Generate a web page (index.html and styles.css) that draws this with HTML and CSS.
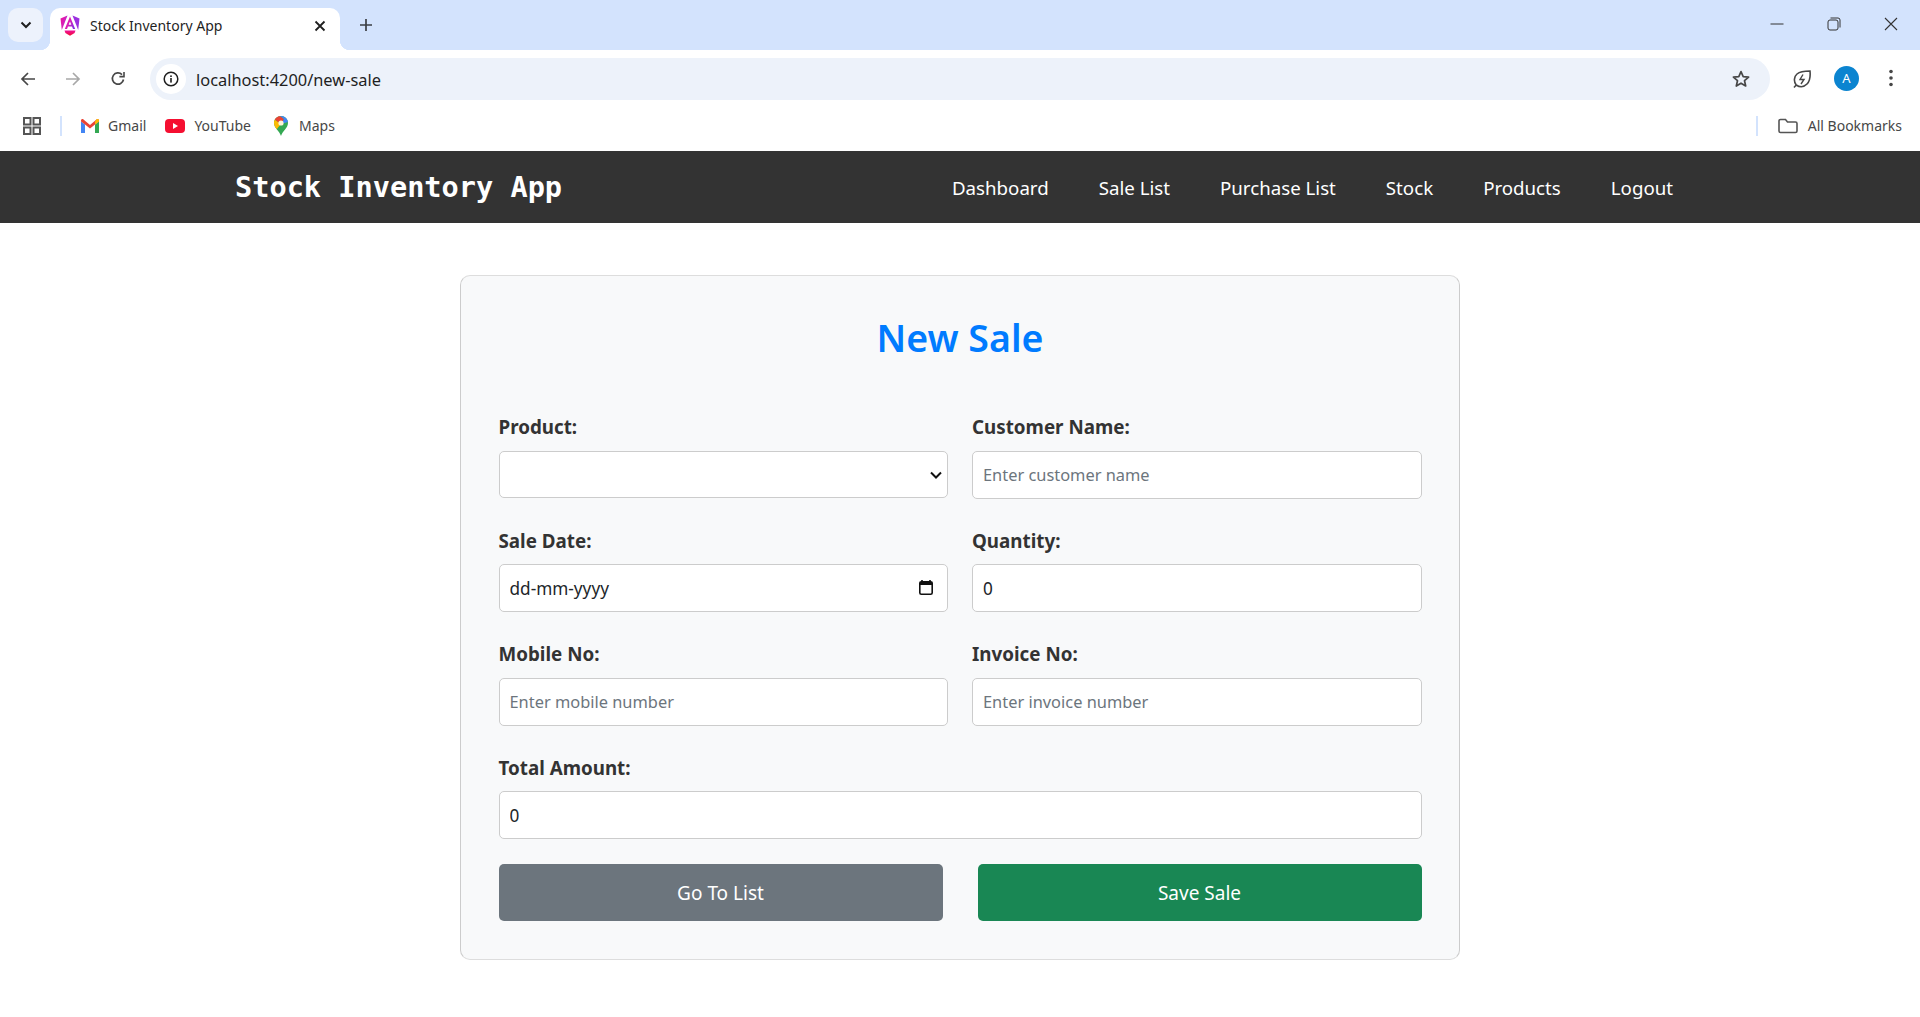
FILE: index.html
```html
<!DOCTYPE html>
<html lang="en">
<head>
    <meta charset="UTF-8">
    <meta name="viewport" content="width=device-width, initial-scale=1.0">
    <title>Stock Inventory App</title>
    <link rel="stylesheet" href="styles.css">
</head>
<body>
    <div class="browser">
        <div class="tab-strip">
            <div class="tab-search">
                <svg width="12" height="8" viewBox="0 0 12 8"><path d="M1.5 1.5 6 6l4.5-4.5" fill="none" stroke="#1f1f1f" stroke-width="2"/></svg>
            </div>
            <div class="tab">
                <svg class="tab-icon" width="20" height="22" viewBox="0 0 20 22">
                    <defs>
                        <linearGradient id="ng" x1="0" y1="0" x2="1" y2="0.6">
                            <stop offset="0" stop-color="#f0109c"/>
                            <stop offset="0.55" stop-color="#d71fb8"/>
                            <stop offset="1" stop-color="#8a2be2"/>
                        </linearGradient>
                        <linearGradient id="ng2" x1="0" y1="0" x2="0" y2="1">
                            <stop offset="0" stop-color="#f0109c"/>
                            <stop offset="1" stop-color="#f00f30"/>
                        </linearGradient>
                    </defs>
                    <path d="M7.500 0.500 0.500 3.500 1.800 15 7.500 0.500Z" fill="url(#ng)"/>
                    <path d="M12.500 0.500 19.500 3.500 18.200 15 12.500 0.500Z" fill="#9b30e0"/>
                    <path d="M10 1.500 4.800 14h2.200l1-2.600h4l1 2.600h2.200L10 1.500Zm0 5 1.300 3.200H8.700L10 6.500Z" fill="url(#ng)"/>
                    <path d="M4.500 15.500h11L14.600 18 10 20.800 5.400 18l-.9-2.500Z" fill="url(#ng2)"/>
                </svg>
                <span class="tab-title">Stock Inventory App</span>
                <svg class="tab-close" width="12" height="12" viewBox="0 0 12 12"><path d="M1.500 1.500l9 9M10.500 1.500l-9 9" stroke="#1f1f1f" stroke-width="1.800"/></svg>
            </div>
            <svg class="new-tab" width="14" height="14" viewBox="0 0 14 14"><path d="M7 1v12M1 7h12" stroke="#3b3f44" stroke-width="1.700"/></svg>
            <div class="window-btns">
                <svg width="14" height="14" viewBox="0 0 14 14"><path d="M0.500 7h13" stroke="#333" stroke-width="1"/></svg>
                <svg width="14" height="14" viewBox="0 0 14 14" fill="none" stroke="#333" stroke-width="1"><rect x="1" y="3" width="10" height="10" rx="2"/><path d="M3.500 1h7.500a2 2 0 0 1 2 2v7.500"/></svg>
                <svg width="14" height="14" viewBox="0 0 14 14"><path d="M1 1l12 12M13 1L1 13" stroke="#333" stroke-width="1.100"/></svg>
            </div>
        </div>

        <div class="toolbar">
            <svg class="tool-icon" width="16" height="16" viewBox="0 0 16 16" fill="none" stroke="#474747" stroke-width="1.700"><path d="M15 8H2M8 2 2 8l6 6"/></svg>
            <svg class="tool-icon" width="16" height="16" viewBox="0 0 16 16" fill="none" stroke="#a8a8a8" stroke-width="1.700"><path d="M1 8h13M8 2l6 6-6 6"/></svg>
            <svg class="tool-icon" width="16" height="16" viewBox="0 0 16 16" fill="none" stroke="#474747" stroke-width="1.700"><path d="M13.500 8.500A5.600 5.600 0 1 1 12 3.600"/><path d="M14 1v4.600H9.400" stroke-width="1.600"/></svg>
            <div class="omnibox">
                <div class="site-info">
                    <svg width="16" height="16" viewBox="0 0 16 16"><circle cx="8" cy="8" r="6.800" fill="none" stroke="#1f1f1f" stroke-width="1.500"/><rect x="7.200" y="7" width="1.600" height="4.600" fill="#1f1f1f"/><rect x="7.200" y="4.400" width="1.600" height="1.600" fill="#1f1f1f"/></svg>
                </div>
                <span class="url">localhost:4200/new-sale</span>
                <svg class="star" width="20" height="20" viewBox="0 0 20 20"><path d="M10 2.600l2.200 5 5.400.5-4.100 3.600 1.200 5.300L10 14.200 5.300 17l1.200-5.300L2.400 8.100l5.400-.5L10 2.600Z" fill="none" stroke="#474747" stroke-width="1.700" stroke-linejoin="round"/></svg>
            </div>
            <svg class="leaf" width="20" height="20" viewBox="0 0 20 20" fill="none" stroke="#474747" stroke-width="1.600"><path d="M2 18.500l2.200-2.500C1.500 12.500 2 7.500 5 5s8-3 13-3c.5 5 0 10-3 13s-7 3.500-10.800 1"/><path d="M11 5.500 8 10.500h4l-3 4.500" stroke-width="1.400"/></svg>
            <div class="avatar">A</div>
            <svg class="kebab" width="4" height="18" viewBox="0 0 4 18" fill="#474747"><circle cx="2" cy="2.500" r="1.800"/><circle cx="2" cy="9" r="1.800"/><circle cx="2" cy="15.500" r="1.800"/></svg>
        </div>

        <div class="bookmarks">
            <svg class="apps" width="18" height="18" viewBox="0 0 18 18" fill="none" stroke="#555" stroke-width="2"><rect x="1" y="1" width="6.500" height="6.500"/><rect x="10.500" y="1" width="6.500" height="6.500"/><rect x="1" y="10.500" width="6.500" height="6.500"/><rect x="10.500" y="10.500" width="6.500" height="6.500"/></svg>
            <span class="bm-sep"></span>
            <div class="bookmark bm-gmail">
                <svg width="18" height="14" viewBox="0 0 18 14">
                    <path d="M0 2.500V14h4V5.500L0 2.500Z" fill="#4285f4"/>
                    <path d="M14 5.500V14h4V2.500l-4 3Z" fill="#34a853"/>
                    <path d="M0 1.500C0 .2 1.500-.4 2.500.4L9 6l6.500-5.600c1-.8 2.500-.2 2.500 1.100v1L14 5.500 9 9.500l-5-4-4-3v-1Z" fill="#ea4335"/>
                    <path d="M14 2.600 15.500.4c1-.8 2.500-.2 2.500 1.100v1l-4 3V2.600Z" fill="#fbbc04"/>
                </svg>
                <span>Gmail</span>
            </div>
            <div class="bookmark bm-youtube">
                <svg width="20" height="14" viewBox="0 0 20 14"><rect width="20" height="14" rx="4" fill="#f50f31"/><path d="M8 4l5 3-5 3V4Z" fill="#fff"/></svg>
                <span>YouTube</span>
            </div>
            <div class="bookmark bm-maps">
                <svg width="14" height="20" viewBox="0 0 14 20">
                    <defs>
                        <clipPath id="pin"><path d="M7 0C3.100 0 0 3.100 0 7c0 5 5.500 8 7 13 1.500-5 7-8 7-13 0-3.900-3.100-7-7-7Z"/></clipPath>
                    </defs>
                    <g clip-path="url(#pin)">
                        <rect width="14" height="20" fill="#34a853"/>
                        <path d="M0 3 7 8 2 14 0 12V3Z" fill="#fbbc04"/>
                        <path d="M0 3 7 8l3-5-4-3H0V3Z" fill="#ea4335"/>
                        <path d="M6 0h8v6L7 8 10 3 6 0Z" fill="#4285f4"/>
                    </g>
                    <circle cx="7" cy="7" r="2.600" fill="#fff6d8"/>
                </svg>
                <span>Maps</span>
            </div>
            <span class="bm-sep bm-sep-right"></span>
            <div class="bookmark all-bookmarks">
                <svg width="20" height="16" viewBox="0 0 20 16" fill="none" stroke="#555" stroke-width="1.600"><path d="M1 3a1.500 1.500 0 0 1 1.500-1.500h5L9.500 4h8A1.500 1.500 0 0 1 19 5.500V13a1.500 1.500 0 0 1-1.500 1.500h-15A1.500 1.500 0 0 1 1 13V3Z"/></svg>
                <span>All Bookmarks</span>
            </div>
        </div>
    </div>

    <nav class="navbar">
        <div class="brand">Stock Inventory App</div>
        <ul class="nav-links">
            <li>Dashboard</li>
            <li>Sale List</li>
            <li>Purchase List</li>
            <li>Stock</li>
            <li>Products</li>
            <li>Logout</li>
        </ul>
    </nav>

    <main class="page">
        <form class="sale-card">
            <h2 class="sale-title">New Sale</h2>
            <div class="form-grid">
                <div class="field">
                    <label for="product">Product:</label>
                    <div class="control-box">
                        <select id="product" class="select-input"><option></option></select>
                        <svg class="select-arrow" width="12" height="8" viewBox="0 0 12 8"><path d="M1 1.500l5 5 5-5" fill="none" stroke="#111" stroke-width="2"/></svg>
                    </div>
                </div>
                <div class="field">
                    <label for="customer">Customer Name:</label>
                    <input id="customer" type="text" placeholder="Enter customer name">
                </div>
                <div class="field">
                    <label for="saleDate">Sale Date:</label>
                    <div class="control-box">
                        <input id="saleDate" type="text" value="dd-mm-yyyy">
                        <svg class="date-icon" width="14" height="15" viewBox="0 0 14 15"><path d="M3 0v2M11 0v2" stroke="#111" stroke-width="1.600"/><rect x="0.800" y="1.800" width="12.400" height="12.400" rx="1.500" fill="none" stroke="#111" stroke-width="1.600"/><rect x="0.800" y="2" width="12.400" height="3" fill="#111"/></svg>
                    </div>
                </div>
                <div class="field">
                    <label for="qty">Quantity:</label>
                    <input id="qty" type="number" value="0">
                </div>
                <div class="field">
                    <label for="mobile">Mobile No:</label>
                    <input id="mobile" type="text" placeholder="Enter mobile number">
                </div>
                <div class="field">
                    <label for="invoice">Invoice No:</label>
                    <input id="invoice" type="text" placeholder="Enter invoice number">
                </div>
                <div class="field field-wide">
                    <label for="total">Total Amount:</label>
                    <input id="total" type="number" value="0">
                </div>
            </div>
            <div class="form-actions">
                <button type="button" class="btn btn-list">Go To List</button>
                <button type="button" class="btn btn-save">Save Sale</button>
            </div>
        </form>
    </main>
</body>
</html>
```

FILE: styles.css
```css
* {
    box-sizing: border-box;
}
body {
    margin: 0;
    font-family: "Noto Sans", "Open Sans", sans-serif;
    color: #212529;
    background-color: #fff;
}
.browser {
    height: 151px;
    background-color: #fff;
}
.tab-strip {
    height: 50px;
    background-color: #d3e3fd;
    display: flex;
    align-items: center;
    padding-left: 8px;
}
.tab-search {
    width: 35px;
    height: 34px;
    border-radius: 10px;
    background-color: #edf2fc;
    display: flex;
    align-items: center;
    justify-content: center;
}
.tab {
    position: relative;
    width: 290px;
    height: 42px;
    margin-left: 7px;
    margin-top: 8px;
    padding: 0 14px 0 10px;
    background-color: #fff;
    border-radius: 10px 10px 0 0;
    display: flex;
    align-items: center;
}
.tab::before,
.tab::after {
    content: "";
    position: absolute;
    bottom: 0;
    width: 10px;
    height: 10px;
}
.tab::before {
    left: -10px;
    background: radial-gradient(circle at 0 0, #d3e3fd 10px, #fff 10.5px);
}
.tab::after {
    right: -10px;
    background: radial-gradient(circle at 100% 0, #d3e3fd 10px, #fff 10.5px);
}
.tab-icon {
    margin-top: -7px;
}
.tab-title {
    margin-left: 10px;
    font-size: 14px;
    color: #1f1f1f;
    flex: 1;
    margin-top: -8px;
}
.tab-close {
    margin-top: -7px;
}
.new-tab {
    margin-left: 19px;
}
.window-btns {
    margin-left: auto;
    display: flex;
    gap: 43px;
    padding-right: 22px;
    margin-top: -2px;
}
.toolbar {
    height: 50px;
    display: flex;
    align-items: center;
    padding-top: 8px;
    padding-left: 20px;
    background-color: #fff;
    border-radius: 10px 10px 0 0;
}
.tool-icon {
    margin-right: 29px;
}
.omnibox {
    width: 1620px;
    height: 42px;
    margin-left: -5px;
    padding-left: 6px;
    padding-right: 19px;
    background-color: #edf2fa;
    border-radius: 21px;
    display: flex;
    align-items: center;
}
.site-info {
    width: 30px;
    height: 30px;
    border-radius: 50%;
    background-color: #fff;
    display: flex;
    align-items: center;
    justify-content: center;
}
.url {
    margin-left: 10px;
    font-size: 16.4px;
    color: #1f1f1f;
    flex: 1;
}
.leaf {
    margin-left: 22px;
}
.avatar {
    width: 25px;
    height: 25px;
    margin-left: 22px;
    margin-top: -2px;
    border-radius: 50%;
    background-color: #0b84d0;
    color: #fff;
    font-size: 13px;
    display: flex;
    align-items: center;
    justify-content: center;
}
.kebab {
    margin-left: 30px;
    margin-top: -2px;
}
.bookmarks {
    height: 51px;
    display: flex;
    align-items: center;
    padding-left: 23px;
    font-size: 14px;
    color: #474747;
}
.bm-sep {
    width: 2px;
    height: 20px;
    margin-left: 19px;
    background-color: #d3e3fd;
}
.bookmark {
    display: flex;
    align-items: center;
    gap: 9px;
}
.bm-gmail {
    margin-left: 19px;
}
.bm-youtube {
    margin-left: 19px;
}
.bm-maps {
    margin-left: 23px;
    gap: 11px;
}
.bm-sep-right {
    margin-left: auto;
}
.all-bookmarks {
    margin-left: 20px;
    padding-right: 18px;
    gap: 10px;
}
.navbar {
    height: 72px;
    padding: 0 247px 0 235px;
    background-color: #333;
    color: #fff;
    display: flex;
    align-items: center;
    justify-content: space-between;
}
.brand {
    font-family: "DejaVu Sans Mono", monospace;
    font-size: 28.6px;
    font-weight: 700;
}
.nav-links {
    list-style: none;
    margin: 0;
    padding: 0;
    display: flex;
    gap: 50px;
    font-size: 18.7px;
}
.page {
    padding-top: 52px;
}
.sale-card {
    width: 1000px;
    height: 685px;
    margin: 0 auto;
    padding: 32px 37.5px 0;
    background-color: #f8f9fa;
    border: 1px solid #ccc;
    border-bottom-color: #ddd;
    border-top-color: #ddd;
    border-radius: 10px;
}
.sale-title {
    margin: 0 0 47px;
    text-align: center;
    font-size: 37.5px;
    font-weight: 600;
    line-height: 60px;
    color: #007bff;
}
.form-grid {
    display: grid;
    grid-template-columns: 1fr 1fr;
    column-gap: 24px;
    row-gap: 30px;
}
.field-wide {
    grid-column: 1 / 3;
}
label {
    display: block;
    margin-bottom: 10.5px;
    font-size: 18.8px;
    font-weight: 700;
    line-height: 25px;
    color: #333;
}
input, select {
    display: block;
    width: 100%;
    height: 48px;
    padding: 0 10px;
    background-color: #fff;
    border: 1px solid #ccc;
    border-radius: 5px;
    font-family: inherit;
    font-size: 17.2px;
    color: #212529;
}
input::placeholder {
    font-size: 16.4px;
    color: #6c757d;
}
.control-box {
    position: relative;
}
.select-input {
    height: 47px;
    appearance: none;
}
.select-arrow {
    position: absolute;
    right: 6px;
    top: 20px;
}
.date-icon {
    position: absolute;
    right: 15px;
    top: 16px;
}
.form-actions {
    margin-top: 25px;
    display: flex;
    justify-content: space-between;
}
.btn {
    width: 444px;
    height: 57px;
    padding-top: 2px;
    border: none;
    border-radius: 5px;
    color: #fff;
    font-family: inherit;
    font-size: 19px;
    cursor: pointer;
}
.btn-list {
    background-color: #6c757d;
}
.btn-save {
    background-color: #198754;
}
```
